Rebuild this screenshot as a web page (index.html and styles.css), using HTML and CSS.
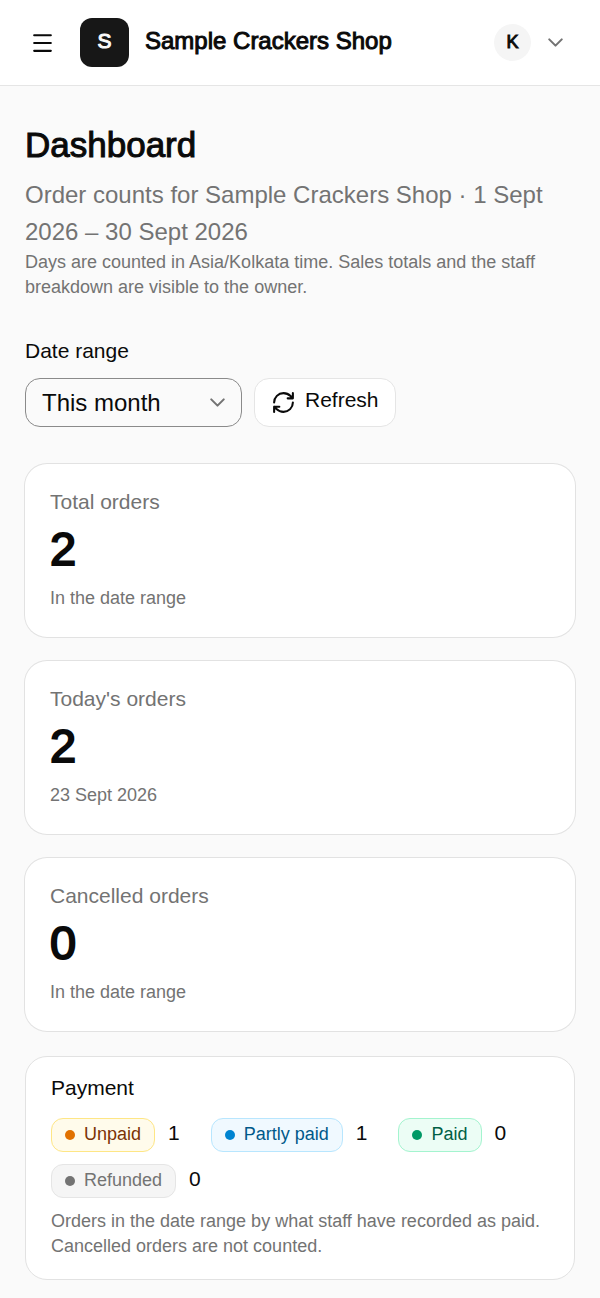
FILE: index.html
```html
<!DOCTYPE html>
<html lang="en">
<head>
<meta charset="utf-8">
<meta name="viewport" content="width=device-width, initial-scale=1">
<title>Dashboard</title>
<link rel="stylesheet" href="styles.css">
</head>
<body>
<header class="topbar">
  <button class="menu-button" type="button" aria-label="Open menu">
    <svg width="25" height="25" viewBox="0 0 24 24" class="icon"><path d="M4 5h16M4 12.5h16M4 20h16"/></svg>
  </button>
  <span class="logo">S</span>
  <span class="shop-name">Sample Crackers Shop</span>
  <button class="account" type="button" aria-label="Account">
    <span class="avatar">K</span>
    <svg width="25" height="25" viewBox="0 0 24 24" class="icon muted"><path d="m6 9 6 6 6-6"/></svg>
  </button>
</header>
<main class="page">
  <section class="intro">
    <h1 class="title">Dashboard</h1>
    <p class="subtitle">Order counts for Sample Crackers Shop · 1 Sept 2026 – 30 Sept 2026</p>
    <p class="note">Days are counted in Asia/Kolkata time. Sales totals and the staff breakdown are visible to the owner.</p>
  </section>
  <form class="filters">
    <label class="filter-label" for="range">Date range</label>
    <div class="filter-row">
      <div class="select-wrap">
        <select class="select" id="range"><option>This month</option></select>
        <svg width="25" height="25" viewBox="0 0 24 24" class="icon muted select-arrow"><path d="m6 9 6 6 6-6"/></svg>
      </div>
      <button class="refresh" type="button">
        <svg width="25" height="25" viewBox="0 0 24 24" class="icon"><path d="M3 12a9 9 0 0 1 9-9 9.75 9.75 0 0 1 6.74 2.74L21 8M21 3v5h-5M21 12a9 9 0 0 1-9 9 9.75 9.75 0 0 1-6.74-2.74L3 16M8 16H3v5"/></svg>
        <span class="refresh-text">Refresh</span>
      </button>
    </div>
  </form>
  <section class="stats">
    <article class="card stat">
      <h2 class="stat-label">Total orders</h2>
      <p class="stat-value">2</p>
      <p class="note">In the date range</p>
    </article>
    <article class="card stat">
      <h2 class="stat-label">Today's orders</h2>
      <p class="stat-value">2</p>
      <p class="note">23 Sept 2026</p>
    </article>
    <article class="card stat">
      <h2 class="stat-label">Cancelled orders</h2>
      <p class="stat-value">0</p>
      <p class="note">In the date range</p>
    </article>
  </section>
  <section class="card payment">
    <h2 class="payment-title">Payment</h2>
    <ul class="statuses">
      <li class="status"><span class="badge unpaid">Unpaid</span><span class="count">1</span></li>
      <li class="status"><span class="badge partly">Partly paid</span><span class="count">1</span></li>
      <li class="status"><span class="badge paid">Paid</span><span class="count">0</span></li>
      <li class="status"><span class="badge refunded">Refunded</span><span class="count">0</span></li>
    </ul>
    <p class="note">Orders in the date range by what staff have recorded as paid. Cancelled orders are not counted.</p>
  </section>
</main>
</body>
</html>
```
FILE: styles.css
```css
* {
  box-sizing: border-box;
}

body {
  margin: 0;
  background: #fafafa;
  color: #0a0a0a;
  font: 21px/32px "Liberation Sans", Arial, sans-serif;
}

h1, h2, p, ul {
  margin: 0;
  padding: 0;
  font-weight: 400;
}

button {
  border: 0;
  padding: 0;
  background: none;
  color: inherit;
  font: inherit;
}

.icon {
  display: block;
  flex: none;
  fill: none;
  stroke: currentColor;
  stroke-width: 2;
  stroke-linecap: round;
  stroke-linejoin: round;
}

.muted {
  color: #737373;
}

.topbar {
  display: flex;
  align-items: center;
  height: 86px;
  padding: 0 32px 0 30px;
  background: #fff;
  border-bottom: 1px solid #e5e5e5;
}

.logo {
  display: grid;
  place-items: center;
  width: 49px;
  height: 49px;
  margin: 0 16px 0 25px;
  padding-bottom: 4px;
  border-radius: 12px;
  background: #171717;
  color: #fafafa;
  -webkit-text-stroke: 1px;
}

.shop-name {
  padding-bottom: 4px;
  font-size: 24px;
  -webkit-text-stroke: 1px;
}

.account {
  display: flex;
  align-items: center;
  gap: 12px;
  margin-left: auto;
}

.avatar {
  display: grid;
  place-items: center;
  width: 37px;
  height: 37px;
  padding-bottom: 2px;
  border-radius: 50%;
  background: #f5f5f5;
  font-size: 18px;
  -webkit-text-stroke: 1px;
}

.page {
  padding: 34px 25px 20px;
}

.title {
  font-size: 35px;
  line-height: 49px;
  -webkit-text-stroke: 1px;
}

.subtitle {
  margin-top: 7px;
  color: #737373;
  font-size: 24px;
  line-height: 37px;
}

.note {
  color: #737373;
  font-size: 18px;
  line-height: 25px;
}

.filters {
  margin: 35px 0 37px;
}

.filter-label {
  display: block;
  margin-bottom: 11px;
}

.filter-row {
  display: flex;
  gap: 12px;
}

.select-wrap {
  position: relative;
  width: 217px;
}

.select {
  appearance: none;
  width: 100%;
  height: 49px;
  padding: 0 40px 1px 16px;
  border: 1px solid #8a8a8a;
  border-radius: 15px;
  background: transparent;
  color: inherit;
  font: 24px "Liberation Sans", Arial, sans-serif;
}

.select-arrow {
  position: absolute;
  top: 12px;
  right: 12px;
  pointer-events: none;
}

.refresh {
  display: flex;
  align-items: center;
  gap: 9px;
  height: 49px;
  padding: 0 16px;
  border: 1px solid #e5e5e5;
  border-radius: 15px;
  background: #fff;
}

.refresh-text {
  padding-bottom: 5px;
}

.stats {
  display: grid;
  gap: 24px;
}

.card {
  border-radius: 22px;
  background: #fff;
}

.stat {
  padding: 22px 25px 26px;
  box-shadow: 0 0 0 1px #e2e2e2;
}

.stat-label {
  color: #737373;
  font-size: 21px;
}

.stat-value {
  margin-bottom: 7px;
  font-size: 47px;
  line-height: 61px;
  -webkit-text-stroke: 2px;
}

.payment {
  margin-top: 25px;
  padding: 15px 25px 20px;
  border: 1px solid #e2e2e2;
}

.payment-title {
  font-size: 21px;
}

.statuses {
  display: flex;
  flex-wrap: wrap;
  gap: 12px 31px;
  margin: 14px 0 11px;
  list-style: none;
}

.status {
  display: flex;
  align-items: center;
  gap: 13px;
}

.badge {
  display: flex;
  align-items: center;
  gap: 9px;
  height: 34px;
  padding: 0 13px 3px;
  border: 1px solid;
  border-radius: 12px;
  font-size: 18px;
}

.badge::before {
  content: "";
  width: 10px;
  height: 10px;
  margin-top: 3px;
  border-radius: 50%;
  background: var(--dot);
}

.count {
  padding-bottom: 4px;
  line-height: 30px;
}

.unpaid {
  --dot: #e17100;
  border-color: #fee685;
  background: #fffbeb;
  color: #7b3306;
}

.partly {
  --dot: #0084d1;
  border-color: #b8e6fe;
  background: #f0f9ff;
  color: #00598a;
}

.paid {
  --dot: #009966;
  border-color: #a4f4cf;
  background: #ecfdf5;
  color: #006045;
}

.refunded {
  --dot: #737373;
  border-color: #e5e5e5;
  background: #f5f5f5;
  color: #737373;
}
```
